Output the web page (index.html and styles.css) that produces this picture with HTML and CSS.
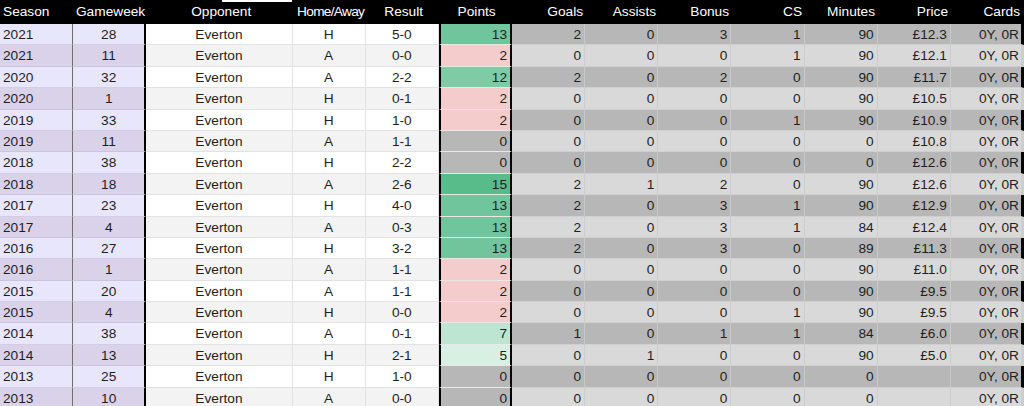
FILE: index.html
```html
<!DOCTYPE html>
<html>
<head>
<meta charset="utf-8">
<link rel="stylesheet" href="styles.css">
</head>
<body>
<div class="sheet">
  <div class="row head">
    <div class="c season">Season</div>
    <div class="c gw">Gameweek</div>
    <div class="c opp">Opponent<span class="sel"></span></div>
    <div class="c ha"><span class="tight">Home/Away</span></div>
    <div class="c res">Result</div>
    <div class="c pts">Points</div>
    <div class="c num">Goals</div>
    <div class="c num">Assists</div>
    <div class="c num">Bonus</div>
    <div class="c num">CS</div>
    <div class="c num">Minutes</div>
    <div class="c num">Price</div>
    <div class="c num cards">Cards</div>
  </div>
  <div id="rows"></div>
</div>
<script src="script.js"></script>
</body>
</html>
```

FILE: script.js
```js
const data = [
  ["2021","28","H","5-0",13,2,0,3,1,90,"£12.3"],
  ["2021","11","A","0-0",2,0,0,0,1,90,"£12.1"],
  ["2020","32","A","2-2",12,2,0,2,0,90,"£11.7"],
  ["2020","1","H","0-1",2,0,0,0,0,90,"£10.5"],
  ["2019","33","H","1-0",2,0,0,0,1,90,"£10.9"],
  ["2019","11","A","1-1",0,0,0,0,0,0,"£10.8"],
  ["2018","38","H","2-2",0,0,0,0,0,0,"£12.6"],
  ["2018","18","A","2-6",15,2,1,2,0,90,"£12.6"],
  ["2017","23","H","4-0",13,2,0,3,1,90,"£12.9"],
  ["2017","4","A","0-3",13,2,0,3,1,84,"£12.4"],
  ["2016","27","H","3-2",13,2,0,3,0,89,"£11.3"],
  ["2016","1","A","1-1",2,0,0,0,0,90,"£11.0"],
  ["2015","20","A","1-1",2,0,0,0,0,90,"£9.5"],
  ["2015","4","H","0-0",2,0,0,0,1,90,"£9.5"],
  ["2014","38","A","0-1",7,1,0,1,1,84,"£6.0"],
  ["2014","13","H","2-1",5,0,1,0,0,90,"£5.0"],
  ["2013","25","H","1-0",0,0,0,0,0,0,""],
  ["2013","10","A","0-0",0,0,0,0,0,0,""]
];
function ptsColor(p){
  if (p === 0) return "#b7b7b7";
  if (p <= 2) return "#f4cccc";
  const f = (p - 2) / 13;
  const mix = (a,b) => Math.round(a + (b - a) * f);
  return "rgb(" + mix(255,87) + "," + mix(255,187) + "," + mix(255,138) + ")";
}
const rows = document.getElementById("rows");
data.forEach(d => {
  const r = document.createElement("div");
  r.className = "row";
  const cells = [
    ["season", d[0]], ["gw", d[1]], ["opp", "Everton"], ["ha", d[2]], ["res", d[3]],
    ["pts", String(d[4])], ["num", d[5]], ["num", d[6]], ["num", d[7]], ["num", d[8]],
    ["num", d[9]], ["num", d[10]], ["num cards", "0Y, 0R"]
  ];
  cells.forEach(([cls, txt]) => {
    const c = document.createElement("div");
    c.className = "c " + cls;
    c.textContent = txt;
    if (cls === "pts") c.style.background = ptsColor(d[4]);
    r.appendChild(c);
  });
  rows.appendChild(r);
});
```

FILE: styles.css
```css
html, body {
  margin: 0;
  padding: 0;
  background: #ffffff;
  overflow: hidden;
}
body {
  width: 1024px;
  height: 406px;
  font-family: "Liberation Sans", Arial, sans-serif;
  font-size: 13.7px;
  color: #1f1f1f;
}
.sheet {
  width: 1024px;
}
.row {
  display: grid;
  grid-template-columns: 1fr 1fr 2fr repeat(10, 1fr);
  height: 21.4px;
}
.c {
  box-sizing: border-box;
  border-right: 1px solid #e2e2e2;
  border-bottom: 1px solid #e2e2e2;
  line-height: 20px;
  padding: 1px 3px 0 3px;
  white-space: nowrap;
  overflow: hidden;
  position: relative;
}
.season { text-align: left; border-right-color: #6e6e6e; }
.gw { text-align: center; border-right: 2px solid #000; }
.opp, .ha, .res { text-align: center; }
.pts {
  text-align: right;
  border-left: 2px solid #000;
  border-right: 2px solid #000;
  border-bottom-color: #e8e8e8;
}
.num { text-align: right; border-right-color: #c9c9c9; }
.cards { border-right: 3px solid #000; padding-right: 2px; }

/* alternating row colours */
.row:nth-child(odd) .season,
.row:nth-child(odd) .gw { background: #e8e6fb; border-bottom-color: #d3cde6; }
.row:nth-child(even) .season,
.row:nth-child(even) .gw { background: #d9d2e9; border-bottom-color: #cbc4dc; }
.row:nth-child(odd) .opp,
.row:nth-child(odd) .ha,
.row:nth-child(odd) .res { background: #ffffff; }
.row:nth-child(even) .opp,
.row:nth-child(even) .ha,
.row:nth-child(even) .res { background: #f3f3f3; }
.row:nth-child(odd) .num { background: #b7b7b7; border-bottom-color: #cfcfcf; }
.row:nth-child(even) .num { background: #d9d9d9; border-bottom-color: #cfcfcf; border-right-color: #cdcdcd; }

/* header */
.row.head {
  height: 24px;
  background: #000;
}
.row.head .c {
  background: #000;
  color: #ffffff;
  border: none;
  line-height: 22px;
  padding-top: 1px;
  overflow: visible;
}
.row.head .ha { padding-left: 0; padding-right: 0; }
.tight { letter-spacing: -0.7px; }
.row.head .pts { text-align: center; }
.row.head .num { padding-right: 3px; }
.row.head .cards { padding-right: 4px; }
.sel {
  position: absolute;
  top: 0;
  left: 74px;
  width: 70px;
  height: 2px;
  background: #ffffff;
}
```
